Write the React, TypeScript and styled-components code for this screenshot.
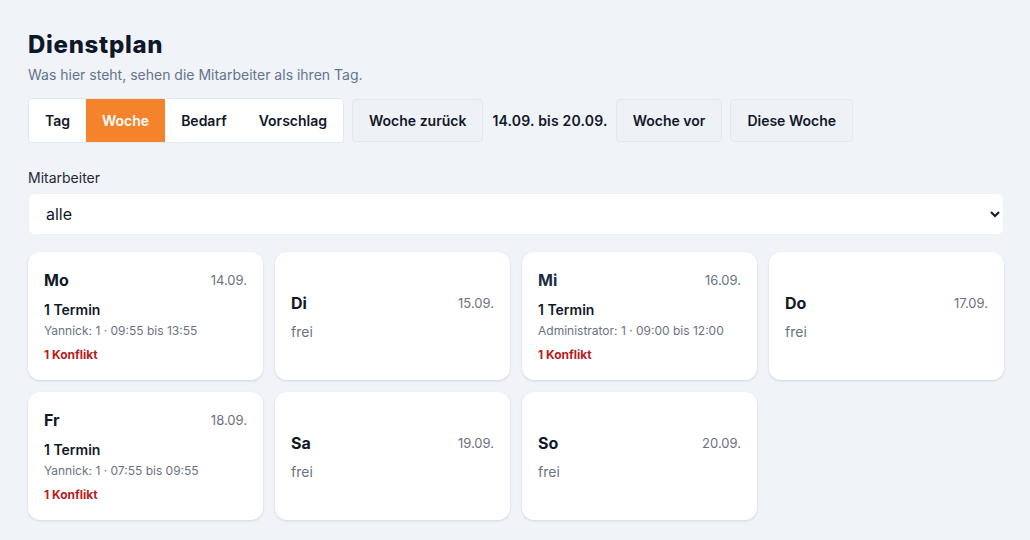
import styled, { createGlobalStyle } from "styled-components";

const GlobalStyle = createGlobalStyle`
  html, body {
    margin: 0;
    padding: 0;
    background: #f0f3f8;
  }
  body {
    font-family: Inter, "Noto Sans", sans-serif;
    color: #111827;
  }
  * { box-sizing: border-box; }
`;

const Page = styled.div`
  padding: 30px 26px 20px 28px;
`;

const Title = styled.h1`
  margin: 0;
  font-family: Inter, sans-serif;
  font-size: 24px;
  font-weight: 800;
  line-height: 30px;
  letter-spacing: 0.7px;
  color: #0f172a;
`;

const Subtitle = styled.p`
  margin: 5px 0 0;
  font-size: 14px;
  line-height: 20px;
  color: #64748b;
`;

const Toolbar = styled.div`
  display: flex;
  align-items: center;
  gap: 8px;
  margin-top: 13px;
`;

const TabGroup = styled.div`
  display: flex;
  height: 45px;
  background: #ffffff;
  border: 1px solid #e2e8f0;
  border-radius: 4px;
  overflow: hidden;
`;

const Tab = styled.button<{ $active?: boolean }>`
  border: none;
  padding: 0 16px;
  font-family: Inter, sans-serif;
  font-size: 14px;
  font-weight: 600;
  color: ${(p) => (p.$active ? "#ffffff" : "#111827")};
  background: ${(p) => (p.$active ? "#f5832b" : "transparent")};
  cursor: pointer;
`;

const NavButton = styled.button`
  height: 43px;
  padding: 0 16px;
  border: 1px solid #e3e8ef;
  border-radius: 4px;
  background: #eef2f7;
  font-family: Inter, sans-serif;
  font-size: 14px;
  font-weight: 600;
  color: #111827;
  cursor: pointer;
`;

const RangeText = styled.span`
  font-size: 14px;
  font-weight: 600;
  color: #111827;
  padding: 0 0 0 1px;
  letter-spacing: 0.2px;
`;

const Label = styled.label`
  display: block;
  margin-top: 25px;
  font-size: 14px;
  line-height: 20px;
  color: #1f2937;
`;

const Select = styled.select`
  display: block;
  width: 100%;
  height: 42px;
  margin-top: 5px;
  padding: 0 8px 0 13px;
  border: 1px solid #edf0f5;
  border-radius: 6px;
  background: #ffffff;
  font-family: Inter, sans-serif;
  font-size: 16px;
  color: #111827;
`;

const Grid = styled.div`
  display: grid;
  grid-template-columns: repeat(4, 235px);
  gap: 12px;
  margin-top: 17px;
`;

const Card = styled.div`
  height: 128px;
  padding: 17px 16px 15px;
  background: #ffffff;
  border-radius: 12px;
  box-shadow: 0 1px 3px rgba(15, 23, 42, 0.1), 0 1px 2px rgba(15, 23, 42, 0.04);
  display: flex;
  flex-direction: column;
  justify-content: center;
`;

const CardHead = styled.div`
  display: flex;
  align-items: center;
  justify-content: space-between;
`;

const DayName = styled.span<{ $today?: boolean }>`
  font-size: 16px;
  font-weight: 700;
  line-height: 20px;
  color: ${(p) => (p.$today ? "#1e2c45" : "#111827")};
`;

const DayDate = styled.span`
  font-size: 13px;
  color: #6b7280;
`;

const Count = styled.div`
  margin-top: 10px;
  font-size: 14px;
  font-weight: 600;
  line-height: 20px;
  color: #111827;
`;

const Detail = styled.div`
  margin-top: 2px;
  font-size: 12px;
  line-height: 18px;
  color: #6b7280;
`;

const Conflict = styled.div`
  margin-top: 6px;
  font-size: 12px;
  font-weight: 700;
  line-height: 18px;
  color: #b91c1c;
`;

const Free = styled.div`
  margin-top: 9px;
  font-size: 14px;
  line-height: 20px;
  color: #6b7280;
`;

type Day = {
  name: string;
  date: string;
  detail?: string;
  today?: boolean;
};

const days: Day[] = [
  { name: "Mo", date: "14.09.", detail: "Yannick: 1 · 09:55 bis 13:55" },
  { name: "Di", date: "15.09." },
  { name: "Mi", date: "16.09.", detail: "Administrator: 1 · 09:00 bis 12:00", today: true },
  { name: "Do", date: "17.09." },
  { name: "Fr", date: "18.09.", detail: "Yannick: 1 · 07:55 bis 09:55" },
  { name: "Sa", date: "19.09." },
  { name: "So", date: "20.09." },
];

const App = () => {
  return (
    <>
      <GlobalStyle />
      <Page>
        <Title>Dienstplan</Title>
        <Subtitle>Was hier steht, sehen die Mitarbeiter als ihren Tag.</Subtitle>
        <Toolbar>
          <TabGroup>
            <Tab>Tag</Tab>
            <Tab $active>Woche</Tab>
            <Tab>Bedarf</Tab>
            <Tab>Vorschlag</Tab>
          </TabGroup>
          <NavButton>Woche zurück</NavButton>
          <RangeText>14.09. bis 20.09.</RangeText>
          <NavButton>Woche vor</NavButton>
          <NavButton>Diese Woche</NavButton>
        </Toolbar>
        <Label htmlFor="ma">Mitarbeiter</Label>
        <Select id="ma" defaultValue="alle">
          <option value="alle">alle</option>
        </Select>
        <Grid>
          {days.map((d) => (
            <Card key={d.name}>
              <CardHead>
                <DayName $today={d.today}>{d.name}</DayName>
                <DayDate>{d.date}</DayDate>
              </CardHead>
              {d.detail ? (
                <>
                  <Count>1 Termin</Count>
                  <Detail>{d.detail}</Detail>
                  <Conflict>1 Konflikt</Conflict>
                </>
              ) : (
                <Free>frei</Free>
              )}
            </Card>
          ))}
        </Grid>
      </Page>
    </>
  );
};

export default App;
